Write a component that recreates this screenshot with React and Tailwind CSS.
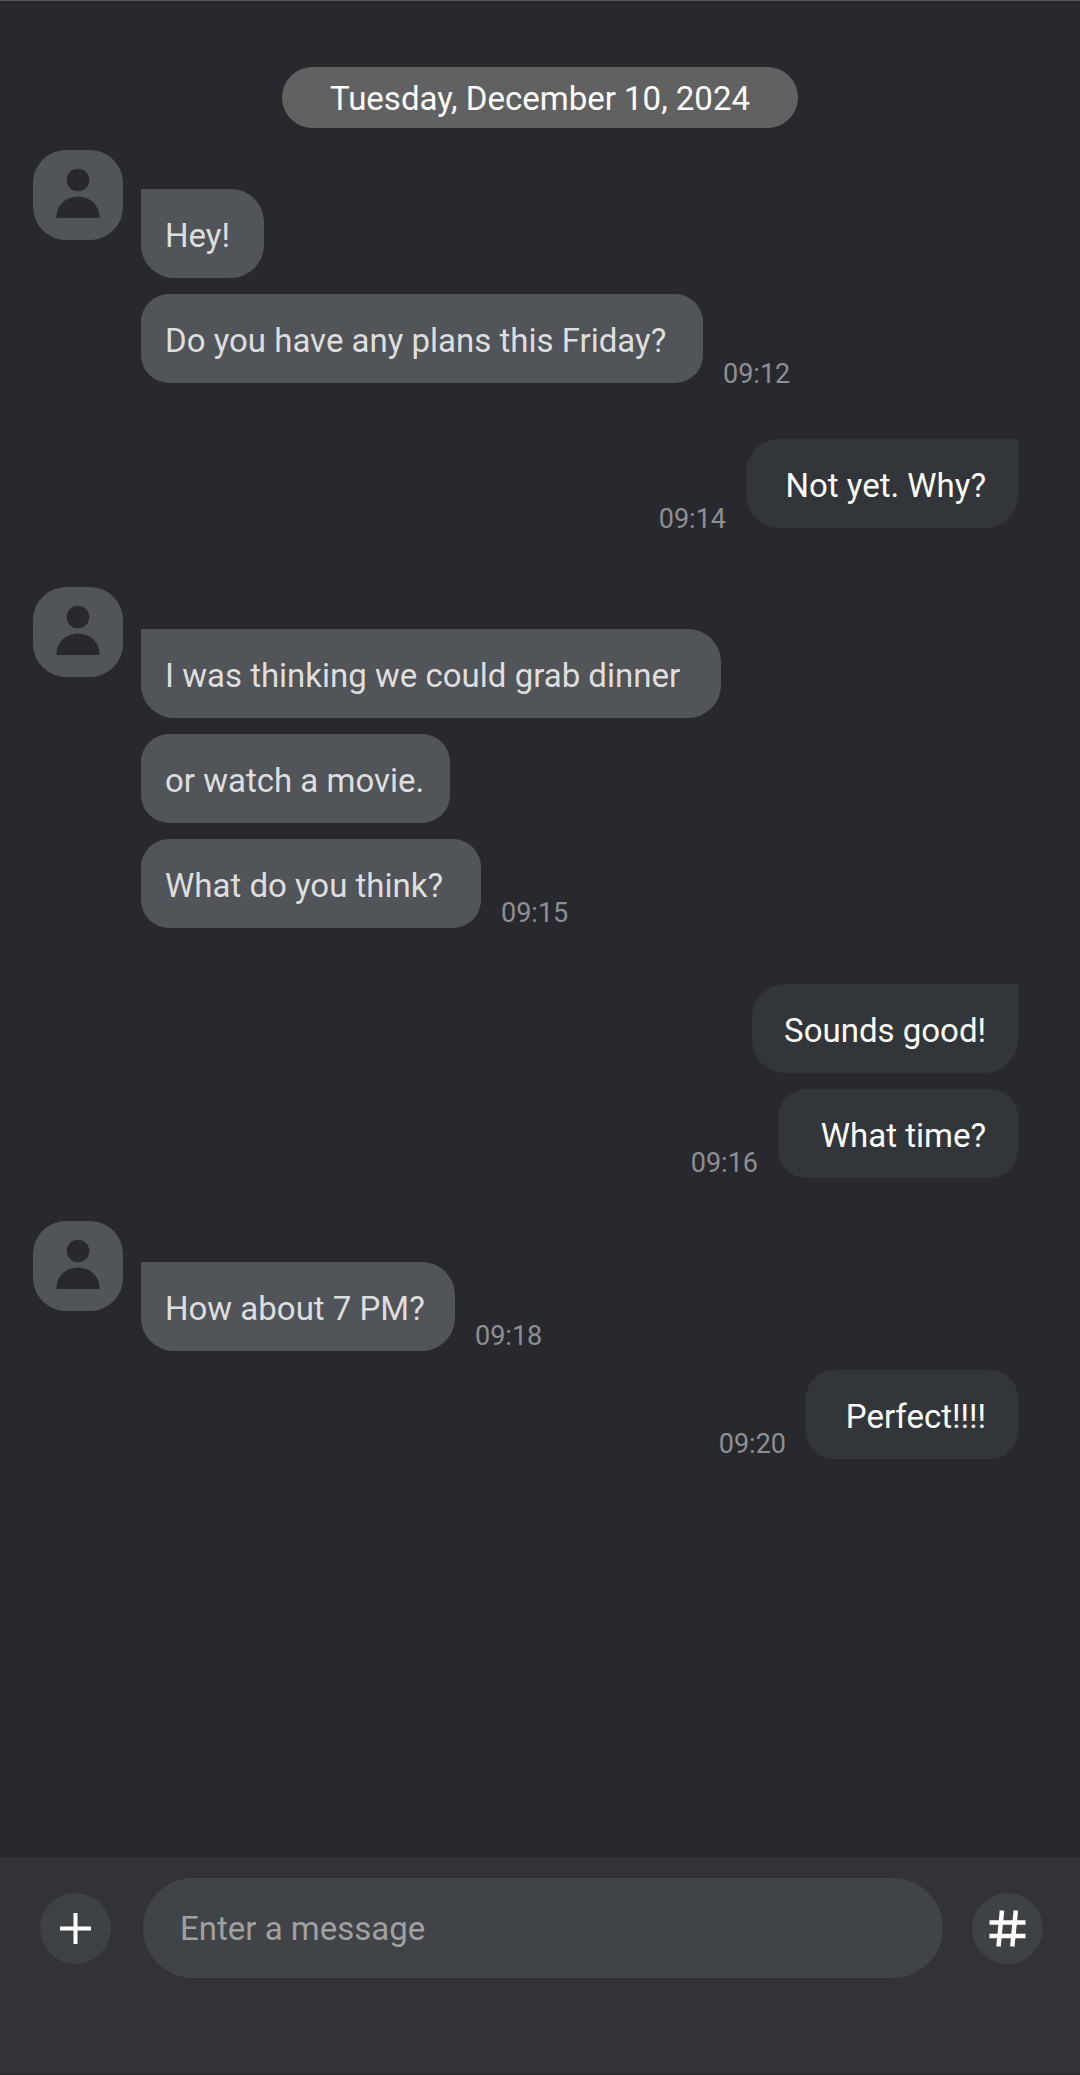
import { useState } from "react";
import clsx from "clsx";

const GROUPS = [
  {
    from: "friend",
    spacing: "mt-[22px]",
    lead: "pt-[39px]",
    messages: [
      { text: "Hey!", width: "w-[123px]", tail: true },
      {
        text: "Do you have any plans this Friday?",
        width: "w-[562px]",
        time: "09:12",
        timeLine: "leading-[18px]",
      },
    ],
  },
  {
    from: "me",
    spacing: "mt-14",
    messages: [
      {
        text: "Not yet. Why?",
        width: "w-[272px]",
        time: "09:14",
        timeLine: "leading-[18px]",
        tail: true,
      },
    ],
  },
  {
    from: "friend",
    spacing: "mt-[59px]",
    lead: "pt-[42px]",
    messages: [
      {
        text: "I was thinking we could grab dinner",
        width: "w-[580px]",
        tail: true,
      },
      { text: "or watch a movie.", width: "w-[309px]" },
      {
        text: "What do you think?",
        width: "w-[340px]",
        time: "09:15",
        timeLine: "leading-[30px]",
      },
    ],
  },
  {
    from: "me",
    spacing: "mt-14",
    messages: [
      { text: "Sounds good!", width: "w-[266px]", tail: true },
      {
        text: "What time?",
        width: "w-[240px]",
        time: "09:16",
        timeLine: "leading-[30px]",
      },
    ],
  },
  {
    from: "friend",
    spacing: "mt-[43px]",
    lead: "pt-[41px]",
    messages: [
      {
        text: "How about 7 PM?",
        width: "w-[314px]",
        time: "09:18",
        timeLine: "leading-[30px]",
        tail: true,
      },
    ],
  },
  {
    from: "me",
    spacing: "mt-[19px]",
    messages: [
      {
        text: "Perfect!!!!",
        width: "w-[212px]",
        time: "09:20",
        timeLine: "leading-[30px]",
      },
    ],
  },
];

export default function App() {
  return (
    <div className="flex min-h-screen flex-col border-t border-[#54575a] bg-[#28292e] font-[Roboto,'Liberation_Sans',sans-serif]">
      <main className="flex-1 pt-[66px] pb-10">
        <div className="flex justify-center">
          <h1 className="rounded-full bg-[#616161] px-12 pt-[9px] pb-[7px] text-center text-[33px] leading-[45px] font-normal text-white">
            Tuesday, December 10, 2024
          </h1>
        </div>

        {GROUPS.map((group, index) => (
          <MessageGroup key={index} group={group} />
        ))}
      </main>

      <Composer />
    </div>
  );
}

function MessageGroup({ group }) {
  const mine = group.from === "me";

  return (
    <section
      className={clsx(
        "flex items-start",
        mine ? "justify-end pr-[62px]" : "gap-[18px] pl-[33px]",
        group.spacing
      )}
    >
      {!mine && <Avatar />}

      <ul
        className={clsx(
          "flex flex-col gap-4",
          mine ? "items-end" : "items-start",
          group.lead
        )}
      >
        {group.messages.map((message) => (
          <Message
            key={message.text}
            message={message}
            mine={mine}
          />
        ))}
      </ul>
    </section>
  );
}

function Message({ message, mine }) {
  return (
    <li
      className={clsx(
        "flex items-end gap-5",
        mine && "flex-row-reverse"
      )}
    >
      <p
        className={clsx(
          "pt-6 pb-5 text-[33px] leading-[45px] whitespace-nowrap",
          message.width,
          message.tail ? "rounded-[33px]" : "rounded-[28px]",
          mine
            ? "bg-[#323539] pr-8 text-right text-white"
            : "bg-[#515458] pl-6 text-[#dedede]",
          message.tail && (mine ? "rounded-tr-none" : "rounded-tl-none")
        )}
      >
        {message.text}
      </p>

      {message.time && (
        <time
          className={clsx(
            "text-[27px] text-[#8e8f93]",
            message.timeLine
          )}
        >
          {message.time}
        </time>
      )}
    </li>
  );
}

function Avatar() {
  return (
    <div className="flex size-[90px] shrink-0 items-center justify-center rounded-[33px] bg-[#515458]">
      <svg
        viewBox="0 0 90 90"
        className="size-full"
        fill="#28292e"
        role="img"
        aria-label="Friend"
      >
        <circle cx="45" cy="30" r="11.3" />
        <path d="M23.500 68v-1.500a21.500 20 0 0 1 43 0V68z" />
      </svg>
    </div>
  );
}

function Composer() {
  const [draft, setDraft] = useState("");

  return (
    <form
      onSubmit={(event) => event.preventDefault()}
      className="flex items-center border-b border-[#28292e] bg-[#313337] pt-[21px] pr-[37px] pb-24 pl-10"
    >
      <button
        type="button"
        aria-label="Add attachment"
        className="size-[71px] shrink-0 rounded-full bg-[#3f4245]"
      >
        <svg
          viewBox="0 0 71 71"
          className="size-full"
          stroke="#fff"
          strokeWidth="4"
        >
          <path d="M20 35.500h31M35.500 20v31" />
        </svg>
      </button>

      <input
        type="text"
        value={draft}
        onChange={(event) => setDraft(event.target.value)}
        aria-label="Message"
        placeholder="Enter a message"
        className="mr-[29px] ml-8 h-[100px] min-w-0 flex-1 rounded-full bg-[#404347] px-[37px] text-[33px] text-white outline-none placeholder:text-[#a0a0a0]"
      />

      <button
        type="button"
        aria-label="Hashtag"
        className="size-[71px] shrink-0 rounded-full bg-[#3f4245]"
      >
        <svg
          viewBox="0 0 71 71"
          className="size-full"
          stroke="#fff"
          strokeWidth="4.5"
        >
          <path d="M17.500 29.500h36M17.500 43h36M30 17.500l-3.500 36M43.800 17.500l-3.500 36" />
        </svg>
      </button>
    </form>
  );
}
